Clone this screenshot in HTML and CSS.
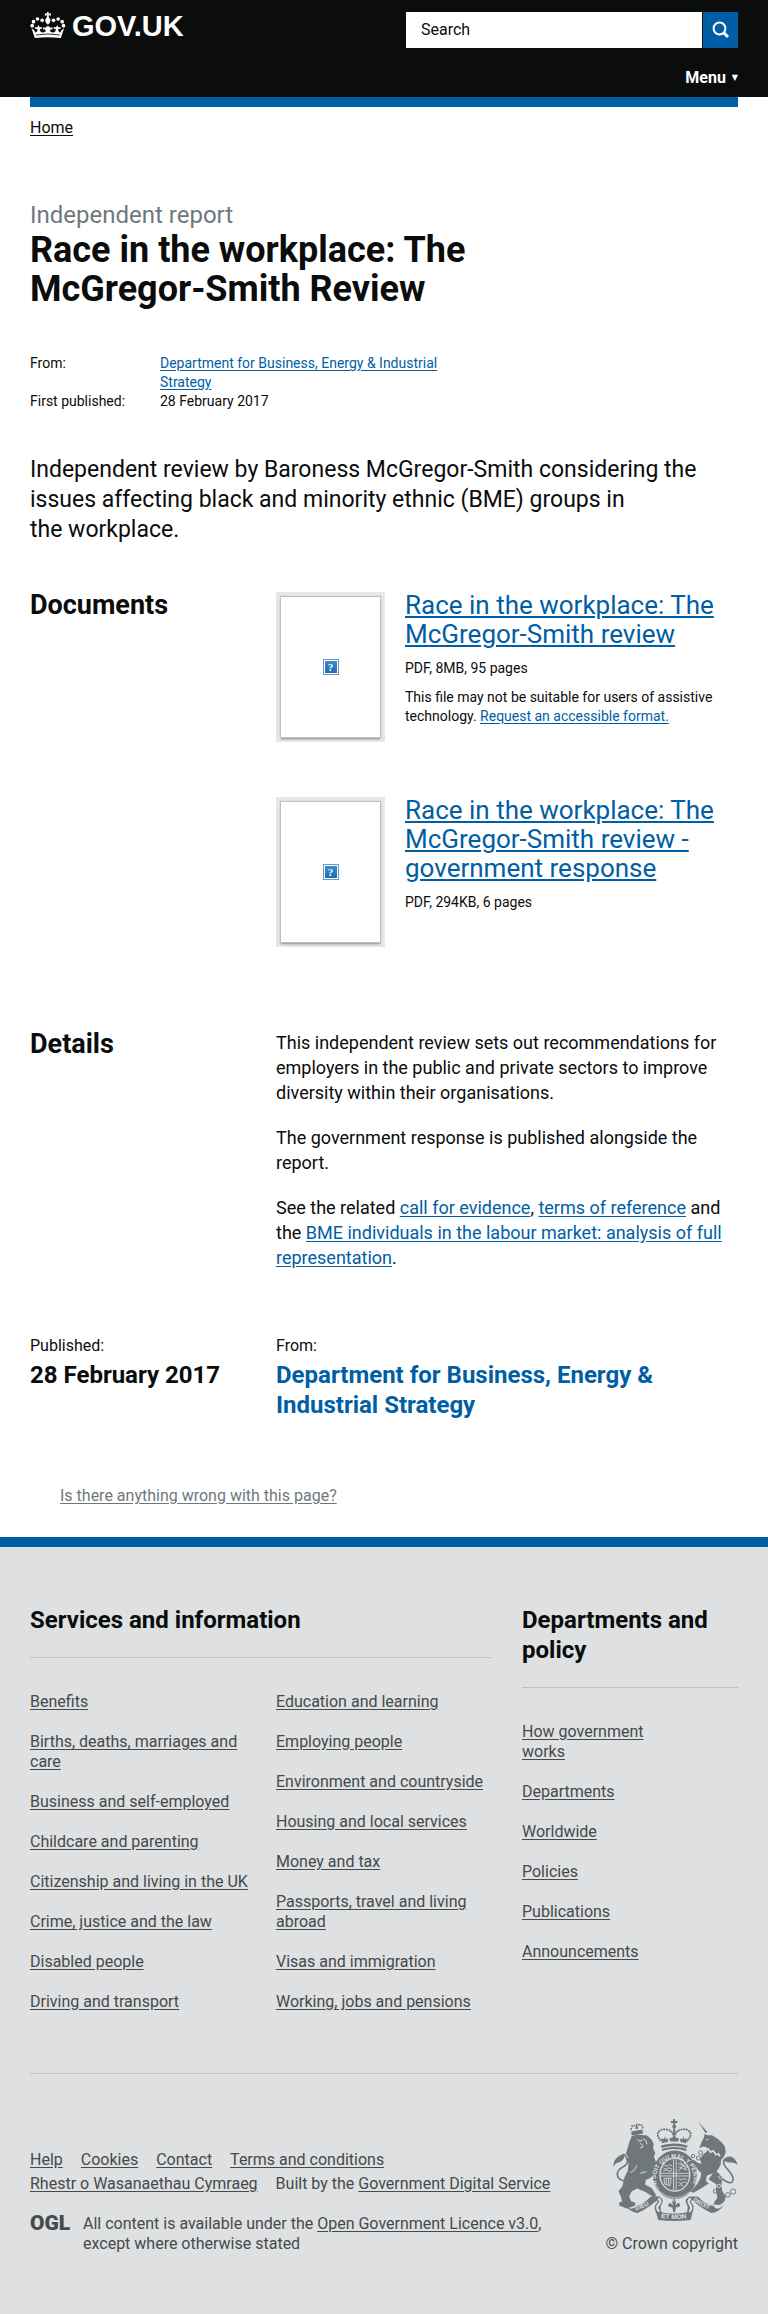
FILE: index.html
```html
<!DOCTYPE html>
<html lang="en">
<head>
<meta charset="utf-8">
<meta name="viewport" content="width=device-width, initial-scale=1">
<title>Race in the workplace: The McGregor-Smith Review - GOV.UK</title>
<link rel="stylesheet" href="styles.css">
</head>
<body>
<header class="site-header">
  <div class="header-inner">
    <a class="logo" href="#">
      <svg class="logo-crown" viewBox="92 36 105 78" aria-hidden="true">
        <g fill="#fff">
          <circle cx="97" cy="77" r="5.5"/><circle cx="101" cy="65" r="5.5"/><circle cx="113" cy="57" r="5.5"/><circle cx="127" cy="61" r="5.5"/>
          <circle cx="191" cy="77" r="5.5"/><circle cx="187" cy="65" r="5.5"/><circle cx="175" cy="57" r="5.5"/><circle cx="161" cy="61" r="5.5"/>
          <path d="M141 36h6l-1 5 7-1v7l-7-1 1 6 5 7-2 9-6 6-6-6-2-9 5-7 1-6-7 1v-7l7 1z"/>
          <path d="M95 85l8 6 4 7 6-6-1-6-6 1v-6l7 1 3-8 3 8 7-1v6l-6-1 1 8 8 4 9-4-3-7-5 2v-7l8 1 2-4h8l2 4 8-1v7l-5-2-3 7 9 4 8-4 1-8-6 1v-6l7 1 3-8 3 8 7-1v6l-6-1-1 6 6 6 4-7 8-6-10 29q-41-5-78 0z"/>
        </g>
        <path d="M108 105q36-6 72 0" fill="none" stroke="#0b0c0c" stroke-width="2.5"/>
      </svg>
      <span>GOV.UK</span>
    </a>
    <div class="header-tools">
      <form class="search" role="search">
        <input class="search-input" type="search" aria-label="Search" placeholder="Search">
        <button class="search-button" type="button" aria-label="Search GOV.UK">
          <svg viewBox="0 0 18 18" aria-hidden="true"><circle cx="7.5" cy="7.5" r="5.9"/><path d="M12 12l4 4" stroke-width="3"/></svg>
        </button>
      </form>
      <button class="menu-button" type="button">Menu <span class="menu-arrow">▼</span></button>
    </div>
  </div>
</header>
<div class="container">
  <div class="brand-bar"></div>
  <nav class="breadcrumb"><a href="#">Home</a></nav>
  <main>
    <p class="kicker">Independent report</p>
    <h1>Race in the workplace: The McGregor-Smith Review</h1>
    <dl class="meta">
      <dt>From:</dt><dd><a href="#">Department for Business, Energy &amp; Industrial Strategy</a></dd>
      <dt>First published:</dt><dd>28 February 2017</dd>
    </dl>
    <p class="lead">Independent review by Baroness McGregor-Smith considering the issues affecting black and minority ethnic (BME) groups in the&nbsp;workplace.</p>

    <section class="row">
      <h2>Documents</h2>
      <div class="wide documents">
        <article class="document">
          <a class="thumb" href="#" aria-label="Document preview"><span class="thumb-page"><span class="missing">?</span></span></a>
          <div>
            <h3><a href="#">Race in the workplace: The McGregor-Smith review</a></h3>
            <p class="small">PDF, 8MB, 95 pages</p>
            <p class="small">This file may not be suitable for users of assistive technology. <a href="#">Request an accessible format.</a></p>
          </div>
        </article>
        <article class="document">
          <a class="thumb" href="#" aria-label="Document preview"><span class="thumb-page"><span class="missing">?</span></span></a>
          <div>
            <h3><a href="#">Race in the workplace: The McGregor-Smith review - government response</a></h3>
            <p class="small">PDF, 294KB, 6 pages</p>
          </div>
        </article>
      </div>
    </section>

    <section class="row details">
      <h2>Details</h2>
      <div class="wide prose">
        <p>This independent review sets out recommendations for employers in the public and private sectors to improve diversity within their organisations.</p>
        <p>The government response is published alongside the report.</p>
        <p>See the related <a href="#">call for evidence</a>, <a href="#">terms of reference</a> and the <a href="#">BME individuals in the labour market: analysis of full representation</a>.</p>
      </div>
    </section>

    <section class="row published">
      <div><p class="label">Published:</p><p class="value">28 February 2017</p></div>
      <div class="wide"><p class="label">From:</p><p class="value"><a href="#">Department for Business, Energy &amp; Industrial Strategy</a></p></div>
    </section>
  </main>
  <p class="report"><a href="#">Is there anything wrong with this page?</a></p>
</div>

<footer class="site-footer">
  <div class="container">
    <div class="row footer-nav">
      <section class="services">
        <h2>Services and information</h2>
        <div class="services-lists">
          <ul>
            <li><a href="#">Benefits</a></li>
            <li><a href="#">Births, deaths, marriages and care</a></li>
            <li><a href="#">Business and self-employed</a></li>
            <li><a href="#">Childcare and parenting</a></li>
            <li><a href="#">Citizenship and living in the UK</a></li>
            <li><a href="#">Crime, justice and the law</a></li>
            <li><a href="#">Disabled people</a></li>
            <li><a href="#">Driving and transport</a></li>
          </ul>
          <ul>
            <li><a href="#">Education and learning</a></li>
            <li><a href="#">Employing people</a></li>
            <li><a href="#">Environment and countryside</a></li>
            <li><a href="#">Housing and local services</a></li>
            <li><a href="#">Money and tax</a></li>
            <li><a href="#">Passports, travel and living abroad</a></li>
            <li><a href="#">Visas and immigration</a></li>
            <li><a href="#">Working, jobs and pensions</a></li>
          </ul>
        </div>
      </section>
      <section>
        <h2>Departments and policy</h2>
        <ul class="policy-list">
          <li><a href="#">How government works</a></li>
          <li><a href="#">Departments</a></li>
          <li><a href="#">Worldwide</a></li>
          <li><a href="#">Policies</a></li>
          <li><a href="#">Publications</a></li>
          <li><a href="#">Announcements</a></li>
        </ul>
      </section>
    </div>
    <div class="footer-meta">
      <div class="footer-legal">
        <ul class="legal-links">
          <li><a href="#">Help</a></li>
          <li><a href="#">Cookies</a></li>
          <li><a href="#">Contact</a></li>
          <li><a href="#">Terms and conditions</a></li>
        </ul>
        <ul class="legal-links">
          <li><a href="#">Rhestr o Wasanaethau Cymraeg</a></li>
          <li>Built by the <a href="#">Government Digital Service</a></li>
        </ul>
        <div class="licence">
          <span class="ogl">OGL</span>
          <p>All content is available under the <a href="#">Open Government Licence v3.0</a>, except where otherwise stated</p>
        </div>
      </div>
      <div class="copyright">
        <svg class="arms" viewBox="68 56 376 308" aria-hidden="true">
          <defs>
            <path id="garter" d="M216 282A57 62 0 1 1 292 282"/>
            <path id="motto-left" d="M137 332Q170 322 194 304"/>
            <path id="motto-mid" d="M212 355Q252 361 298 355"/>
            <path id="motto-right" d="M308 302Q334 322 372 334"/>
          </defs>
          <g fill="#6f777b">
            <path d="M68 200C68 180 80 168 101 160C104 174 96 186 80 188Q72 192 68 200z"/>
            <path d="M118 122l6-14 16-5 30 3 14 12 6 14-2 12 7 14-4 12 9 24 12-2 2 16-14 8-16 16-18 8-2 14 20 10 14 22-8 6-26-16-24-10-16 8-8 16 6 14 14 6-4 9-24 7-22-9 0-9 9-4-4-14-7-16 12-16 6-26 10-20 2-22-7-12 7-6-8-10z"/>
            <path d="M122 94l34-6 2 12-34 6z"/>
            <circle cx="122" cy="86" r="3"/><circle cx="125" cy="78" r="3"/><circle cx="132" cy="76" r="3"/><circle cx="146" cy="73" r="3"/><circle cx="153" cy="75" r="3"/><circle cx="157" cy="82" r="3"/><circle cx="139" cy="83" r="4"/>
            <path d="M136 70h5v14h-4z"/>
            <path d="M249 56h6v6h7v6h-7v9h-6v-9h-7v-6h7z"/><circle cx="252" cy="79" r="6"/>
            <path d="M212 136Q252 124 292 136L288 153Q252 140 216 153z"/>
            <path d="M217 128l-5-14 9 3 3-9 3 9 8-2-3 11zM241 124l-4-9 10-3 5-11 5 11 10 3-4 9zM287 128l5-14-9 3-3-9-3 9-8-2 3 11zM249 84h6v22h-6z"/>
            <path d="M325 64l27 31-5 4z"/>
            <path d="M334 128l8-16 2-11 8 4 14 0 14 8 12 10 12 14 4 18-6 16-8 8-2 16-8 14-12 10-22 8-2 16 8 8-22 14-24 14-8-3 18-22 11-18 3-16-10-10-8-14-18-8-10 4-6-8 14-8 18 5 10 8 10 2-4-14 8-12 14-12-2-12-10-2-12 5z"/>
            <path d="M376 210l22 22-4 24 4 20 10 14-4 14-14 12-20-2 6-12 8-8-6-20 2-20-24-16z"/>
            <path d="M402 178C414 164 434 166 444 194Q430 184 418 187Q407 187 402 178z"/>
            <path d="M252 296l6 9-2 12q10-13 14-2 0 9-12 7l-1 4-2 9-3 4-3-4-2-9-1-4q-12 2-12-7 4-11 14 2l-2-12z"/>
          </g>
          <g fill="none" stroke="#6f777b">
            <path d="M112 244C70 242 76 212 96 202C112 193 118 182 101 163" stroke-width="5"/>
            <path d="M404 178C390 198 432 216 430 238C428 256 414 248 396 236" stroke-width="5"/>
            <path d="M218 126C188 104 206 82 230 88Q248 91 250 108M286 126C316 104 298 82 274 88Q256 91 254 108" stroke-width="6" stroke-linecap="round" stroke-dasharray="1 7"/>
            <circle cx="376" cy="274" r="6" stroke-width="3"/><circle cx="390" cy="290" r="7" stroke-width="3"/><circle cx="414" cy="285" r="7" stroke-width="3"/><circle cx="430" cy="275" r="8" stroke-width="3"/>
            <circle cx="332" cy="158" r="6" stroke-width="3"/><circle cx="325" cy="174" r="6" stroke-width="3"/><circle cx="309" cy="168" r="5" stroke-width="3"/>
          </g>
          <ellipse cx="254" cy="224" rx="67" ry="73" fill="#6f777b"/>
          <ellipse cx="254" cy="224" rx="47" ry="52" fill="#dee0e2"/>
          <ellipse cx="254" cy="224" rx="43" ry="48" fill="#6f777b"/>
          <g fill="none" stroke="#dee0e2" stroke-width="2.5">
            <path d="M250 178v94M258 178v94M211 220h86M211 228h86"/>
            <path d="M221 194l9 5 8-5 8 3M219 203l8 5 9-5 9 4M219 213l9-4 8 5 9-3M264 190l28 12M265 200l24 10M285 188l-20 25M270 185l20 25M221 236l22-2-4 24-15-5zM228 236v19M235 235v21M265 236l9 4 9-4 8 4M265 246l8 5 9-5 7 3M266 258l7-4 8 5"/>
            <path d="M204 148Q252 130 302 148" stroke-width="3"/>
            <path d="M208 276q46 36 92 0M208 286q46 36 92 0" stroke-width="2"/>
            <path d="M140 118l8 5 8-4M150 128l8 12-10 4M158 116q12 4 11 16M348 120l8-3M120 218q14-6 20-22M150 220l18-5" stroke-width="3"/>
            <circle cx="396" cy="210" r="6"/><circle cx="392" cy="232" r="5"/><circle cx="387" cy="258" r="5"/>
            <path d="M346 150l8-4 8 10 8-4 8 12 8-3 4 8" stroke-width="5"/>
          </g>
          <g fill="#6f777b">
            <path d="M100 312Q122 338 138 318Q160 314 181 291L212 290Q184 320 142 340Q118 338 100 312z"/>
            <path d="M404 312Q384 338 370 318Q344 314 324 291L294 290Q324 320 364 340Q390 338 404 312z"/>
            <path d="M196 334Q252 350 308 334L302 361Q252 367 204 361z"/>
            <path d="M192 290Q224 292 216 310Q206 326 216 344L198 338Q186 324 202 306zM314 290Q280 292 288 310Q298 326 288 344L306 338Q318 324 302 306z"/>
          </g>
          <path d="M204 296Q216 304 204 315Q196 326 207 336M302 296Q290 304 300 315Q308 326 298 336" fill="none" stroke="#dee0e2" stroke-width="7"/>
          <g class="motto">
            <text><textPath href="#garter">HONI SOIT QUI MAL Y PENSE</textPath></text>
            <text><textPath href="#motto-left">DIEU</textPath></text>
            <text class="motto-large"><textPath href="#motto-mid">ET MON</textPath></text>
            <text><textPath href="#motto-right">DROIT</textPath></text>
          </g>
        </svg>
        <a href="#">© Crown copyright</a>
      </div>
    </div>
  </div>
</footer>
</body>
</html>
```

FILE: styles.css
```css
* { box-sizing: border-box; }
body {
  margin: 0;
  background: #fff;
  color: #0b0c0c;
  font: 16px/20px Roboto, "Liberation Sans", sans-serif;
}
h1, h2, h3, p, ul, dl, dd { margin: 0; padding: 0; }
ul { list-style: none; }
a { color: #005ea5; text-underline-offset: 2px; }
button, input { font: inherit; border: 0; border-radius: 0; margin: 0; }

.container { max-width: 1020px; margin: 0 auto; padding: 0 30px; }

.site-header { background: #0b0c0c; }
.header-inner {
  display: flex;
  justify-content: space-between;
  align-items: flex-start;
  max-width: 1020px;
  margin: 0 auto;
  padding: 12px 30px 9px;
}
.logo {
  display: flex;
  gap: 6px;
  color: #fff;
  font: bold 29px/28px "Liberation Sans", Arial, sans-serif;
  text-decoration: none;
}
.logo-crown { width: 36px; height: 26px; }
.header-tools { width: 332px; display: flex; flex-direction: column; gap: 20px; }
.search { display: flex; gap: 1px; height: 36px; }
.search-input {
  flex: 1;
  min-width: 0;
  padding: 0 15px;
  background: #fff;
  color: #0b0c0c;
  appearance: none;
}
.search-input::placeholder { color: #0b0c0c; opacity: 1; }
.search-button {
  display: grid;
  place-items: center;
  width: 35px;
  padding: 0;
  background: #005ea5;
}
.search-button svg { width: 18px; height: 18px; fill: none; stroke: #fff; stroke-width: 2; }
.menu-button {
  align-self: flex-end;
  display: flex;
  gap: 6px;
  padding: 0;
  background: none;
  color: #fff;
  font-weight: 700;
}
.menu-arrow { font: 8px/20px "DejaVu Sans", sans-serif; }

.brand-bar { height: 10px; background: #005ea5; }
.breadcrumb { padding-top: 11px; }
.breadcrumb a { color: #0b0c0c; }

.kicker { margin-top: 62px; font-size: 24px; line-height: 30px; color: #6f777b; }
h1 { max-width: 462px; margin-top: 1px; font-size: 36px; line-height: 39px; }
.meta {
  display: grid;
  grid-template-columns: 130px 290px;
  margin-top: 45px;
  font-size: 14px;
  line-height: 19px;
}
.lead { margin-top: 44px; font-size: 23px; line-height: 30px; }

.row { display: grid; grid-template-columns: repeat(3, 1fr); column-gap: 30px; }
.row > .wide { grid-column: span 2; }
.row > h2 { font-size: 27px; line-height: 29px; }
main > .row { margin-top: 46px; }
.documents { display: grid; gap: 54px; }
.document { display: grid; grid-template-columns: 109px 1fr; gap: 20px; align-items: start; }
.document h3 { font-weight: 400; font-size: 26px; line-height: 29px; }
.small { margin-top: 10px; font-size: 14px; line-height: 19px; }
.thumb {
  display: block;
  margin-top: 1px;
  padding: 5px;
  background: #e6e7e7;
  text-decoration: none;
}
.thumb-page {
  display: grid;
  place-items: center;
  height: 140px;
  background: #fff;
  box-shadow: 0 0 1px 1px #bfc0c0, 0 2px 2px #858686;
}
.missing {
  width: 16px;
  height: 16px;
  border: 1px solid #6c95c8;
  background: linear-gradient(#3a91d0, #1c69b1);
  box-shadow: inset 0 0 0 1px #fff;
  color: #fff;
  font: bold 11px/14px "Liberation Serif", serif;
  text-align: center;
}

main > .details { margin-top: 83px; }
.prose { display: grid; gap: 20px; font-size: 18px; line-height: 25px; }
main > .published { margin-top: 66px; }
.value { margin-top: 4px; font-size: 24px; line-height: 30px; font-weight: 700; }
.value a { text-decoration: none; }
.report { margin: 66px 0 31px; padding-left: 30px; }
.report a { color: #6f777b; }

.site-footer {
  padding: 58px 0 60px;
  border-top: 10px solid #005ea5;
  background: #dee0e2;
  color: #454a4c;
}
.site-footer a { color: #454a4c; }
.footer-nav { padding-bottom: 61px; border-bottom: 1px solid #bfc1c3; }
.services { grid-column: span 2; }
.footer-nav h2 {
  padding-bottom: 22px;
  border-bottom: 1px solid #bfc1c3;
  margin-bottom: 34px;
  color: #0b0c0c;
  font-size: 24px;
  line-height: 30px;
}
.services-lists { display: grid; grid-template-columns: calc(50% + 5px) 1fr; gap: 10px; }
.footer-nav ul { display: flex; flex-direction: column; gap: 20px; }
.footer-nav .policy-list { max-width: 140px; }
.footer-meta {
  display: flex;
  justify-content: space-between;
  align-items: flex-end;
  padding-top: 45px;
}
.footer-legal { max-width: 550px; }
.legal-links { display: flex; flex-wrap: wrap; column-gap: 18px; line-height: 24px; }
.licence { display: flex; gap: 12px; margin-top: 18px; }
.licence p { max-width: 470px; }
.ogl { width: 41px; font-size: 21px; line-height: 18px; font-weight: 900; }
.copyright { display: flex; flex-direction: column; align-items: flex-end; gap: 13px; }
.copyright a { text-decoration: none; }
.arms { width: 125px; height: 102px; }
.motto { fill: #dee0e2; font: bold 18px "Liberation Sans", sans-serif; }
.motto-large { font-size: 20px; }
```
